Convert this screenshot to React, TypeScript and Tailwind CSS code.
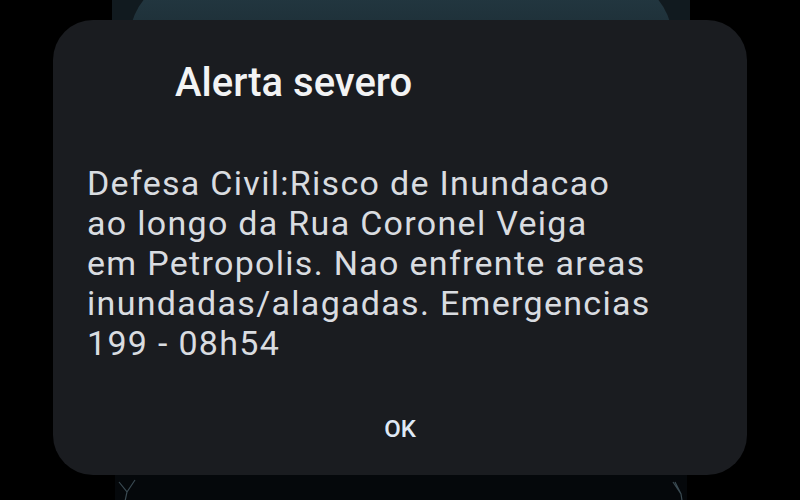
export default function App() {
  return (
    <div className="relative h-[500px] w-[800px] overflow-hidden bg-black font-['Roboto','Liberation_Sans',sans-serif]">
      {/* device behind the dialog, top */}
      <div className="absolute left-[112px] top-[-30px] h-[80px] w-[578px] rounded-[28px] bg-[#111a1f]">
        <div className="mx-[18px] mt-[8px] h-[60px] rounded-t-[90px] bg-gradient-to-b from-[#243a44] to-[#1d2e36]" />
      </div>
      {/* device behind the dialog, bottom */}
      <div className="absolute left-[115px] top-[460px] h-[60px] w-[572px] bg-[#05080b]">
        <svg width="572" height="60" className="absolute left-0 top-0">
          <path d="M4 22 L12 32 L6 60 M12 32 L20 20" stroke="#3a4a52" strokeWidth="1.2" fill="none" />
          <path d="M560 22 L566 34 L570 60 M566 34 L558 22" stroke="#3a4a52" strokeWidth="1.2" fill="none" />
        </svg>
      </div>

      <div className="relative ml-[53px] mt-[20px] flex h-[455px] w-[694px] flex-col rounded-[40px] bg-[#1a1c20] pt-[39px]">
        <div className="pl-[122px] text-[40px] font-medium leading-[48px] text-[#f2f3f4]">
          Alerta severo
        </div>
        <div className="mt-[56px] whitespace-nowrap pl-[34px] text-[34px] leading-[40px] tracking-[1.3px] text-[#d9dce0]">
          Defesa Civil:Risco de Inundacao
          <br />
          ao longo da Rua Coronel Veiga
          <br />
          em Petropolis. Nao enfrente areas
          <br />
          inundadas/alagadas. Emergencias
          <br />
          199 - 08h54
        </div>
        <div className="mt-[50px] text-center text-[24px] font-medium leading-[32px] text-[#dfe9f5]">
          OK
        </div>
      </div>
    </div>
  );
}
